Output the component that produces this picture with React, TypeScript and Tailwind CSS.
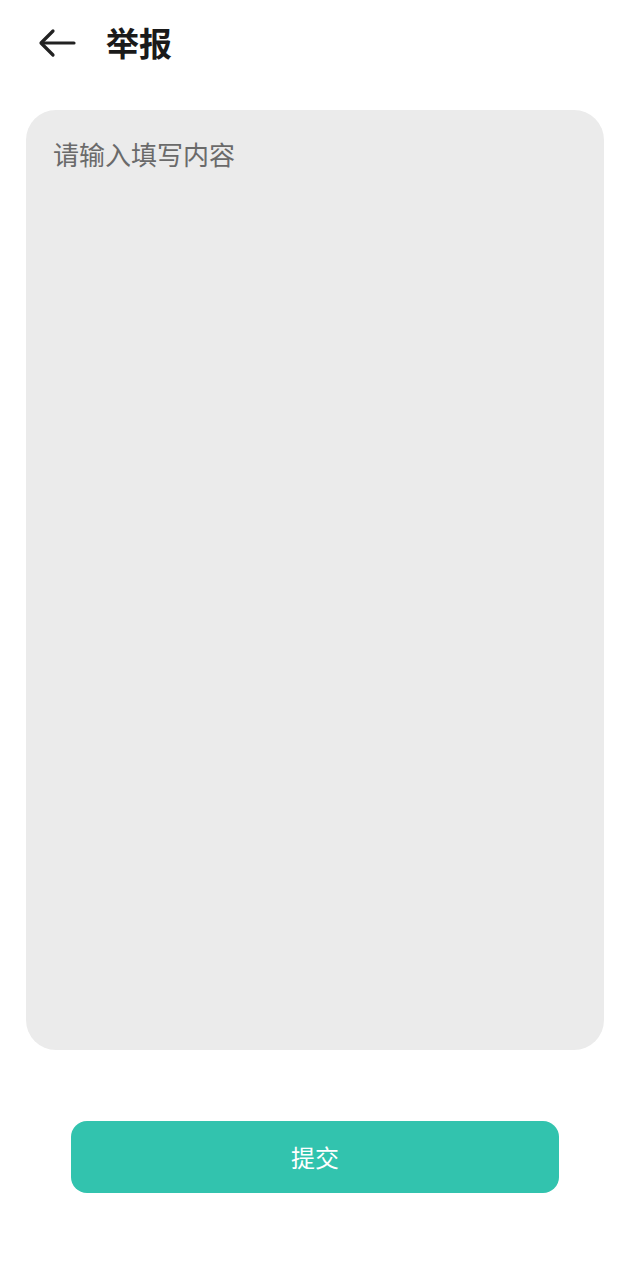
export default function App() {
  return (
    <div className="min-h-[1280px] w-full bg-white flex flex-col" style={{ fontFamily: '"Noto Sans CJK SC", "Noto Sans", sans-serif' }}>
      <header className="flex items-center h-[86px] pl-[38px]">
        <svg width="38" height="30" viewBox="0 0 38 30" fill="none" stroke="#222" strokeWidth="3.2" strokeLinecap="round" strokeLinejoin="round">
          <path d="M36 15H4" />
          <path d="M15 3L3 15l12 12" />
        </svg>
        <h1 className="ml-[30px] text-[33px] font-bold text-[#1a1a1a] leading-none -mt-[2px]">举报</h1>
      </header>

      <div className="mx-[26px] mt-[24px] h-[940px] rounded-[30px] bg-[#ebebeb] px-[27px] pt-[24px]">
        <textarea
          className="w-full h-full resize-none bg-transparent outline-none text-[26px] leading-[40px] text-[#333] placeholder:text-[#6a6a6a]"
          placeholder="请输入填写内容"
        />
      </div>

      <div className="flex justify-center mt-[71px]">
        <button className="w-[488px] h-[72px] rounded-[16px] bg-[#32c3ae] text-white text-[24px]">提交</button>
      </div>
    </div>
  )
}
